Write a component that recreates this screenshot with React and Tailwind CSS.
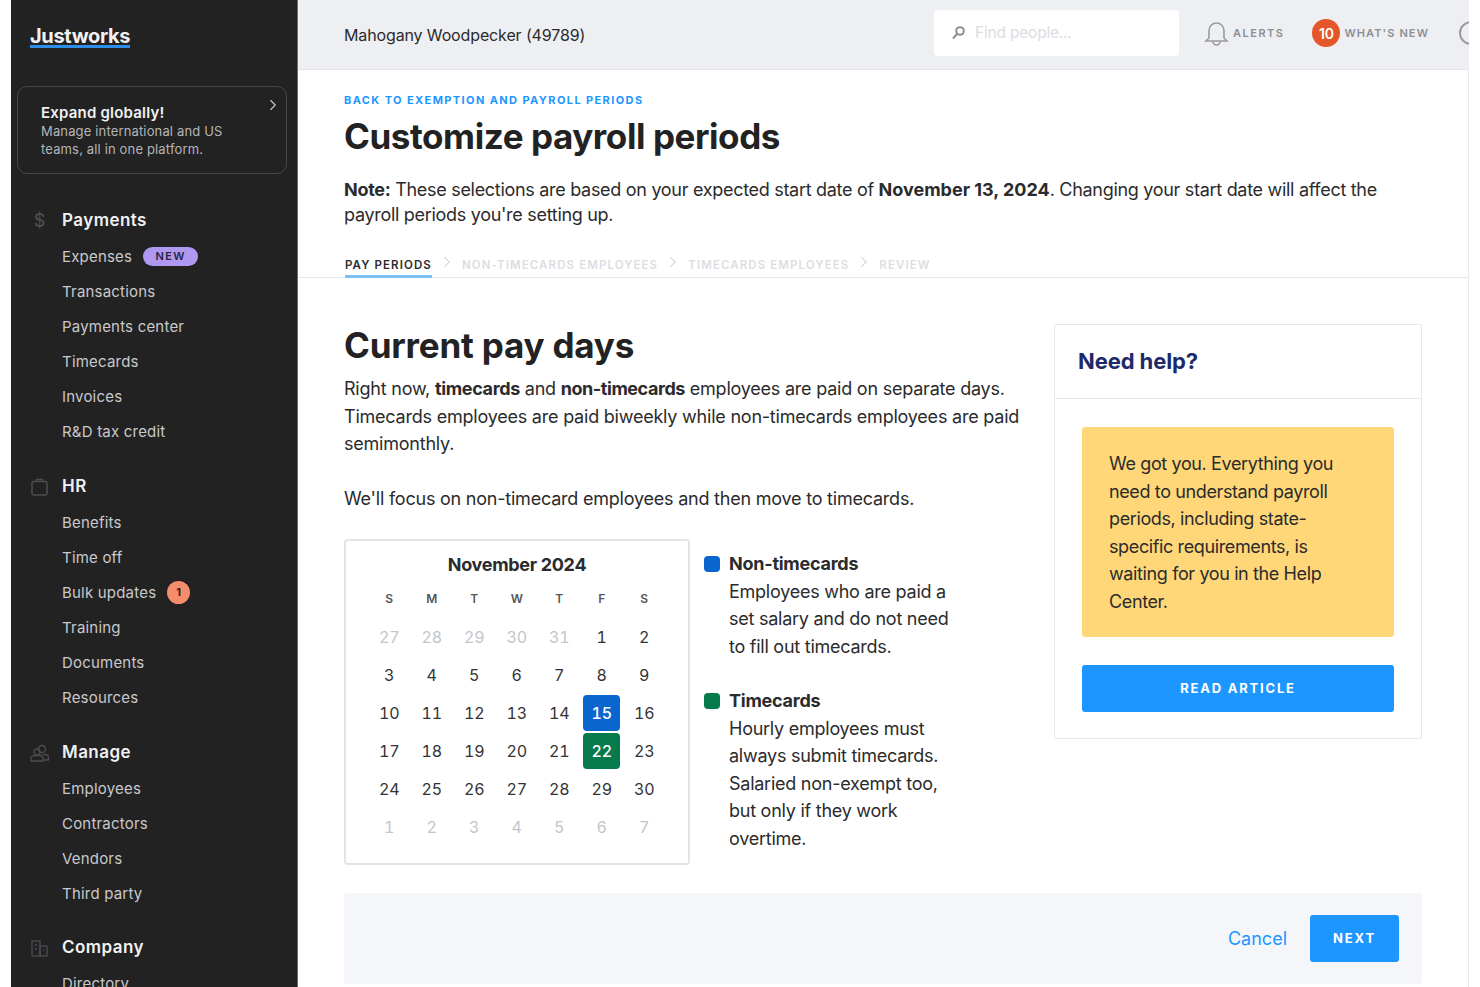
import React from "react";
import { ChevronRight } from "lucide-react";

const Sans = "font-['Inter','Liberation_Sans',sans-serif]";

function NavItem({ children, badge }) {
  return (
    <div className="flex h-[35px] items-center pl-[45px] text-[15px] tracking-[0.2px] text-[#c9c9cb]">
      <span>{children}</span>
      {badge}
    </div>
  );
}

function NavHead({ icon, children }) {
  return (
    <div className="flex h-[38px] items-center">
      <div className="flex w-[45px] justify-center text-[#4c4d51]">{icon}</div>
      <span className="text-[17px] font-semibold tracking-[0.45px] text-[#f1f1f2]">{children}</span>
    </div>
  );
}

const rows = [
  ["27", "28", "29", "30", "31", "1", "2"],
  ["3", "4", "5", "6", "7", "8", "9"],
  ["10", "11", "12", "13", "14", "15", "16"],
  ["17", "18", "19", "20", "21", "22", "23"],
  ["24", "25", "26", "27", "28", "29", "30"],
  ["1", "2", "3", "4", "5", "6", "7"],
];

function Calendar() {
  return (
    <div className="h-[326px] w-[346px] shrink-0 rounded-[4px] border-2 border-[#e3e4e8] pt-[12px]">
      <div className="text-center text-[18px] font-bold leading-[24px] tracking-[-0.3px] text-[#2b2b2d]">November 2024</div>
      <div className="mt-[10px] grid grid-cols-[repeat(7,42.5px)] pl-[22px]">
        {["S", "M", "T", "W", "T", "F", "S"].map((d, i) => (
          <div key={i} className="h-[23px] text-center text-[12px] font-semibold leading-[23px] text-[#55565a]">{d}</div>
        ))}
      </div>
      <div className="mt-[8px] grid grid-cols-[repeat(7,42.5px)] grid-rows-[repeat(6,38px)] pl-[22px]">
        {rows.flatMap((r, ri) =>
          r.map((n, ci) => {
            const muted = (ri === 0 && ci < 5) || ri === 5;
            if (n === "15" && ri === 2)
              return (
                <div key={n} className="flex items-center justify-center">
                  <div className="flex h-[36px] w-[37px] items-center justify-center rounded-[4px] bg-[#0a66cf] text-[16px] font-medium tabular-nums text-white">15</div>
                </div>
              );
            if (n === "22" && ri === 3)
              return (
                <div key={n} className="flex items-center justify-center">
                  <div className="flex h-[36px] w-[37px] items-center justify-center rounded-[4px] bg-[#067a4c] text-[16px] font-medium tabular-nums text-white">22</div>
                </div>
              );
            return (
              <div key={`${ri}-${ci}`} className={`flex items-center justify-center text-[16px] tabular-nums ${muted ? "text-[#c3c5cc]" : "text-[#333336]"}`}>{n}</div>
            );
          })
        )}
      </div>
    </div>
  );
}

export default function App() {
  return (
    <div className={`${Sans} flex h-[987px] w-[1480px] overflow-hidden bg-white pl-[11px] pr-[11px] text-[#2b2b2d]`}>
      <aside className="w-[287px] shrink-0 overflow-hidden border-r border-[#6d6d6f] bg-[#222223] pl-[6px]">
        <div className="flex h-[86px] items-start pl-[13px] pt-[28px]">
          <span className="border-b-[3px] border-[#2f8fe8] text-[20px] font-bold leading-[17px] tracking-[-0.35px] text-[#f1f1f2]">Justworks</span>
        </div>
        <div className="relative h-[88px] w-[270px] rounded-[10px] border border-[#47474a] pl-[23px] pt-[16px]">
          <div className="text-[15px] font-semibold leading-[19px] tracking-[0.2px] text-[#f1f1f2]">Expand globally!</div>
          <div className="text-[13px] leading-[18px] tracking-[0.15px] text-[#b5b5b8]">Manage international and US<br />teams, all in one platform.</div>
          <ChevronRight className="absolute right-[4px] top-[9px] text-[#c9c9cb]" size={18} strokeWidth={1.5} />
        </div>
        <div className="mt-[28px]">
          <NavHead icon={<span className="text-[18px] font-medium leading-none">$</span>}>Payments</NavHead>
          <NavItem badge={<span className="-mt-[2px] ml-[11px] flex h-[19px] w-[55px] items-center justify-center rounded-full bg-[#ae98f2] text-[11px] font-semibold tracking-[1.4px] text-[#2a2440]">NEW</span>}>Expenses</NavItem>
          <NavItem>Transactions</NavItem>
          <NavItem>Payments center</NavItem>
          <NavItem>Timecards</NavItem>
          <NavItem>Invoices</NavItem>
          <NavItem>R&amp;D tax credit</NavItem>
        </div>
        <div className="mt-[18px]">
          <NavHead icon={
            <svg width="17" height="18" viewBox="0 0 17 18" fill="none" stroke="currentColor" strokeWidth="1.5"><rect x="1" y="3.5" width="15" height="13.5" rx="2" /><path d="M5.5 3.5V1.5h6v2" /></svg>
          }>HR</NavHead>
          <NavItem>Benefits</NavItem>
          <NavItem>Time off</NavItem>
          <NavItem badge={<span className="-mt-[2px] ml-[11px] flex h-[23px] w-[23px] items-center justify-center rounded-full bg-[#f58d6c] text-[11px] font-bold text-[#3a2018]">1</span>}>Bulk updates</NavItem>
          <NavItem>Training</NavItem>
          <NavItem>Documents</NavItem>
          <NavItem>Resources</NavItem>
        </div>
        <div className="mt-[18px]">
          <NavHead icon={
            <svg width="19" height="18" viewBox="0 0 19 18" fill="none" stroke="currentColor" strokeWidth="1.3"><circle cx="12" cy="5" r="3.5" /><circle cx="7" cy="8" r="3" /><path d="M1 17v-2.5A3 3 0 0 1 4 11.5h6a3 3 0 0 1 3 3V17z" /><path d="M13 10.5h2.5a3 3 0 0 1 3 3V16H13" /></svg>
          }>Manage</NavHead>
          <NavItem>Employees</NavItem>
          <NavItem>Contractors</NavItem>
          <NavItem>Vendors</NavItem>
          <NavItem>Third party</NavItem>
        </div>
        <div className="mt-[17px]">
          <NavHead icon={
            <svg width="17" height="17" viewBox="0 0 17 17" fill="none" stroke="currentColor" strokeWidth="1.3"><rect x="1" y="1" width="8" height="15" /><rect x="9" y="6" width="7" height="10" /><path d="M4 5h2M4 9h2M12 10h1" /></svg>
          }>Company</NavHead>
          <NavItem>Directory</NavItem>
        </div>
      </aside>

      <main className="min-w-0 flex-1 overflow-hidden">
        <header className="flex h-[70px] items-center border-b border-[#e3e4e8] bg-[#eeeff3] pl-[46px]">
          <span className="w-[590px] shrink-0 text-[16px] tracking-[-0.13px] text-[#2b2b2d]">Mahogany Woodpecker (49789)</span>
          <div className="mb-[4px] flex h-[46px] w-[245px] shrink-0 items-center rounded-[4px] bg-white pl-[17px] text-[15.5px] tracking-[-0.2px] text-[#dcdde2]">
            <svg className="mr-[9px]" width="15" height="15" viewBox="0 0 15 15" fill="none" stroke="#8d8e93" strokeWidth="2"><circle cx="9" cy="6" r="3.8" /><path d="M6 9L2 13.5" /></svg>
            Find people...
          </div>
          <svg className="mb-[3px] ml-[25px] shrink-0" width="25" height="27" viewBox="0 0 25 27" fill="none" stroke="#9a9b9f" strokeWidth="1.6"><path d="M5 18V10.5a7.5 7.5 0 0 1 15 0V18l3 3H2z" /><path d="M9 21.5a3.5 3.5 0 0 0 7 0" /></svg>
          <span className="mb-[3px] ml-[4px] shrink-0 text-[11px] font-semibold tracking-[1.5px] text-[#8d8e93]">ALERTS</span>
          <span className="mb-[3px] ml-[28px] flex h-[28px] w-[28px] shrink-0 items-center justify-center rounded-full bg-[#e4572a] text-[14px] font-semibold text-white">10</span>
          <span className="mb-[3px] ml-[4px] shrink-0 whitespace-nowrap text-[11px] font-semibold tracking-[1.1px] text-[#8d8e93]">WHAT'S NEW</span>
          <svg className="mb-[3px] ml-[30px] shrink-0" width="24" height="24" viewBox="0 0 24 24" fill="none" stroke="#9a9b9f" strokeWidth="2"><circle cx="12" cy="12" r="11" /><path d="M12 5v7h5" /></svg>
        </header>

        <div className="h-[917px] border-r border-[#ebecef] pt-[23px]">
          <div className="pl-[46px]">
            <div className="text-[11px] font-bold leading-[14px] tracking-[1.4px] text-[#1e96ff]">BACK TO EXEMPTION AND PAYROLL PERIODS</div>
            <h1 className="mt-[7px] text-[35px] font-bold leading-[44px] tracking-[-0.42px] text-[#222223]">Customize payroll periods</h1>
            <p className="mt-[19px] w-[1060px] text-[18px] leading-[25px] tracking-[-0.3px] text-[#2b2b2d]">
              <b className="font-bold">Note:</b> These selections are based on your expected start date of <b className="font-bold tracking-[0px]">November 13, 2024</b>. Changing your start date will affect the payroll periods you're setting up.
            </p>
          </div>
          <div className="mt-[26px] flex h-[25px] items-start border-b border-[#e7e8ec] pl-[47px] text-[11.5px] font-semibold leading-[24px] tracking-[1.1px] text-[#dcdde2]">
            <span className="h-[25px] border-b-[3px] border-[#7cc0fb] text-[#2b2b2d]">PAY PERIODS</span>
            <ChevronRight className="mx-[6px] text-[#c9cad0]" size={18} strokeWidth={1.4} />
            <span>NON-TIMECARDS EMPLOYEES</span>
            <ChevronRight className="mx-[6px] text-[#c9cad0]" size={18} strokeWidth={1.4} />
            <span>TIMECARDS EMPLOYEES</span>
            <ChevronRight className="mx-[6px] text-[#c9cad0]" size={18} strokeWidth={1.4} />
            <span>REVIEW</span>
          </div>

          <div className="flex pl-[46px] pt-[46px]">
            <div className="w-[710px] shrink-0">
              <h2 className="-mt-px text-[35px] font-bold leading-[44px] tracking-[-0.2px] text-[#222223]">Current pay days</h2>
              <p className="mt-[8px] w-[690px] text-[18px] leading-[27.5px] tracking-[-0.22px]">
                Right now, <b className="font-bold tracking-[-0.35px]">timecards</b> and <b className="font-bold tracking-[-0.45px]">non-timecards</b> employees are paid on separate days. Timecards employees are paid biweekly while non-timecards employees are paid semimonthly.
              </p>
              <p className="mt-[27px] text-[18px] leading-[27.5px] tracking-[-0.22px]">We'll focus on non-timecard employees and then move to timecards.</p>
              <div className="mt-[27px] flex">
                <Calendar />
                <div className="ml-[14px] pt-[11px] text-[18px] leading-[27.5px] tracking-[-0.25px]">
                  <div className="flex items-center font-bold"><span className="mr-[9px] h-[16px] w-[16px] rounded-[4px] bg-[#0a66cf]" />Non-timecards</div>
                  <div className="w-[250px] pl-[25px]">Employees who are paid a set salary and do not need to fill out timecards.</div>
                  <div className="mt-[27px] flex items-center font-bold"><span className="mr-[9px] h-[16px] w-[16px] rounded-[4px] bg-[#067a4c]" />Timecards</div>
                  <div className="w-[250px] pl-[25px]">Hourly employees must always submit timecards. Salaried non-exempt too, but only if they work overtime.</div>
                </div>
              </div>
            </div>
            <div className="h-[415px] w-[368px] shrink-0 rounded-[2px] border border-[#e7e8ec]">
              <div className="flex h-[74px] items-center border-b border-[#e7e8ec] pl-[23px] text-[22px] font-bold tracking-[-0.1px] text-[#1c2a6b]">Need help?</div>
              <div className="px-[27px] pt-[28px]">
                <div className="h-[210px] rounded-[3px] bg-[#ffd778] pl-[27px] pr-[45px] pt-[23px] text-[18px] leading-[27.5px] tracking-[-0.38px]">
                  We got you. Everything you need to understand payroll periods, including state-specific requirements, is waiting for you in the Help Center.
                </div>
                <div className="mt-[28px] flex h-[47px] items-center justify-center rounded-[3px] bg-[#1e96ff] text-[13px] font-bold tracking-[1.8px] text-white">READ ARTICLE</div>
              </div>
            </div>
          </div>

          <div className="ml-[46px] mt-[28px] flex h-[91px] w-[1078px] items-center justify-end rounded-[3px] bg-[#f5f6fa] pr-[23px]">
            <span className="mr-[23px] text-[18px] tracking-[0px] text-[#1e96ff]">Cancel</span>
            <div className="flex h-[47px] w-[89px] items-center justify-center rounded-[3px] bg-[#1e96ff] text-[13px] font-bold tracking-[1.8px] text-white">NEXT</div>
          </div>
        </div>
      </main>
    </div>
  );
}
